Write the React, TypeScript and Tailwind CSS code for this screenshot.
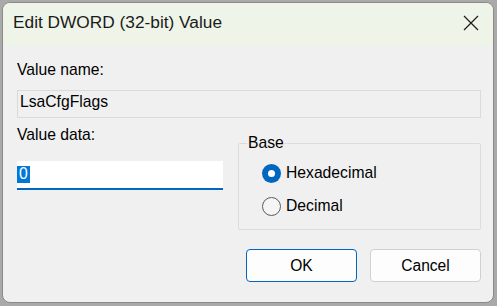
import React from "react";

const body = { fontFamily: '"Liberation Sans", Arial, sans-serif' };

function Radio({ checked }: { checked: boolean }) {
  return checked ? (
    <span className="flex h-[19px] w-[19px] items-center justify-center rounded-full bg-[#0067c0]">
      <span className="h-[7px] w-[7px] rounded-full bg-white" />
    </span>
  ) : (
    <span className="h-[19px] w-[19px] rounded-full border border-[#5b5b5b] bg-[#f5f5f5]" />
  );
}

export default function App() {
  return (
    <div className="h-[306px] w-[497px] overflow-hidden bg-[#a9a9a9] pl-[2px] pt-[2px]" style={body}>
      <div className="flex h-[301px] w-[492px] flex-col overflow-hidden rounded-[8px] border border-[#8a8a8a] bg-[#f0f0f0]">
        {/* title bar */}
        <div className="flex h-[43px] shrink-0 items-center justify-between bg-[#eef5e8] pl-[10px] pr-[14px]">
          <span className="pb-[3px] text-[17.3px] leading-none text-[#1b1b1b]">Edit DWORD (32-bit) Value</span>
          <svg width="16" height="16" viewBox="0 0 16 16" className="mb-[4px]">
            <path d="M1 1 L15 15 M15 1 L1 15" stroke="#1b1b1b" strokeWidth="1.2" fill="none" />
          </svg>
        </div>

        {/* body */}
        <div className="flex flex-col pl-[14px] pr-[12px] text-[15.7px] text-black">
          <div className="mt-[14px] h-[20px] leading-[20px]">Value name:</div>
          <div className="mt-[10px] flex h-[28px] w-[464px] items-center border border-[#dadada] bg-[#f0f0f0] pb-[4px] pl-[2px] leading-none">
            LsaCfgFlags
          </div>

          <div className="flex w-[464px] justify-between">
            <div className="flex w-[206px] flex-col">
              <div className="mt-[7px] h-[20px] leading-[20px]">Value data:</div>
              <div className="mt-[16px] flex h-[29px] items-center border-b-2 border-[#0067c0] bg-white pb-[1px]">
                <span className="flex h-[17px] items-center bg-[#0078d7] px-[2px] leading-none text-white">0</span>
              </div>
            </div>

            <fieldset className="mt-[15px] h-[97px] w-[243px] rounded-[2px] border border-[#dcdcdc] pl-[23px]">
              <legend className="-ml-[15px] px-[1px] text-[15.7px] leading-[20px]">Base</legend>
              <div className="mt-[10px] flex items-center gap-[5px]">
                <Radio checked />
                <span className="leading-[20px]">Hexadecimal</span>
              </div>
              <div className="mt-[13px] flex items-center gap-[5px]">
                <Radio checked={false} />
                <span className="leading-[20px]">Decimal</span>
              </div>
            </fieldset>
          </div>

          <div className="mt-[19px] flex w-[464px] justify-end gap-[13px] text-[15.6px]">
            <button className="h-[33px] w-[111px] rounded-[4px] border border-[#0067c0] bg-[#fdfdfd] text-black">OK</button>
            <button className="h-[33px] w-[111px] rounded-[4px] border border-[#d0d0d0] bg-[#fdfdfd] text-black">Cancel</button>
          </div>
        </div>
      </div>
    </div>
  );
}
